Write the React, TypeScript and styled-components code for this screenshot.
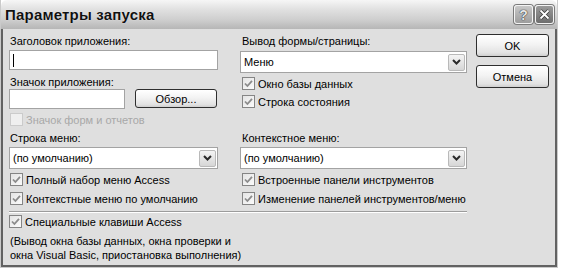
import React from "react";
import styled, { createGlobalStyle } from "styled-components";

const GlobalStyle = createGlobalStyle`
  body {
    margin: 0;
    background: #ffffff;
    font-family: "Liberation Sans", Arial, sans-serif;
    font-size: 11px;
    color: #000;
  }
`;

const Window = styled.div`
  width: 558px;
  height: 268px;
  box-sizing: border-box;
  display: flex;
  flex-direction: column;
  border: 1px solid #cacaca;
  border-top: none;
`;

const TitleBar = styled.div`
  flex: none;
  height: 29px;
  box-sizing: border-box;
  display: flex;
  align-items: center;
  padding: 0 3px 0 4px;
  border-radius: 6px 6px 0 0;
  background: linear-gradient(#f6f6f6 0%, #e2e2e2 30%, #cdcdcd 70%, #b6b6b6 100%);
`;

const Title = styled.div`
  flex: 1;
  font-size: 15px;
  font-weight: bold;
  letter-spacing: 0.2px;
  color: #111;
  text-shadow: 0 0 1px #ffffff;
`;

const CaptionButton = styled.div<{ $dark?: boolean }>`
  width: 19px;
  height: 19px;
  margin-left: 2px;
  box-sizing: border-box;
  border: 1px solid #f4f4f4;
  border-radius: 3px;
  display: flex;
  align-items: center;
  justify-content: center;
  background: ${(p) =>
    p.$dark
      ? "linear-gradient(#9a9a9a, #6e6e6e)"
      : "linear-gradient(#c8c8c8, #9d9d9d)"};
  box-shadow: 0 0 0 1px #7a7a7a;
  color: #e6e6e6;
  font-weight: bold;
  font-size: 14px;
  text-shadow: 0 0 1px #222, 0 0 1px #222;
`;

const Frame = styled.div`
  flex: 1;
  display: flex;
  align-items: flex-start;
  background: #dfdfdf;
  border: 2px solid #626262;
  border-top: none;
  padding: 6px 0 0 6px;
`;

const Main = styled.div`
  display: grid;
  grid-template-columns: 209px 227px;
  column-gap: 22px;
`;

const Column = styled.div<{ $inset: number; $lower?: boolean }>`
  display: flex;
  flex-direction: column;
  align-items: flex-start;
  margin-top: ${(p) => (p.$lower ? 6 : 0)}px;

  & > .inset {
    margin-left: ${(p) => p.$inset}px;
  }
`;

const Label = styled.div<{ $mt?: number }>`
  height: 13px;
  line-height: 13px;
  margin-top: ${(p) => p.$mt || 0}px;
  white-space: nowrap;
`;

const TextBox = styled.div<{ $w: number; $mt?: number }>`
  width: ${(p) => p.$w}px;
  height: 20px;
  box-sizing: border-box;
  margin-top: ${(p) => p.$mt || 0}px;
  border: 1px solid #a3a3a3;
  background: #fff;
  display: flex;
  align-items: center;
`;

const Caret = styled.span`
  width: 1px;
  height: 13px;
  margin-left: 3px;
  background: #000;
`;

const Row = styled.div<{ $mt?: number }>`
  display: flex;
  align-items: flex-start;
  margin-top: ${(p) => p.$mt || 0}px;
`;

const Button = styled.div<{ $w: number; $h: number; $ml?: number }>`
  width: ${(p) => p.$w}px;
  height: ${(p) => p.$h}px;
  margin-left: ${(p) => p.$ml || 0}px;
  box-sizing: border-box;
  border: 1px solid #2e2e2e;
  border-radius: 3px;
  background: linear-gradient(#ffffff 0%, #f3f3f3 45%, #e2e2e2 85%, #cfcfcf 100%);
  display: flex;
  align-items: center;
  justify-content: center;
`;

const Select = styled.div<{ $mt?: number }>`
  width: 100%;
  height: 22px;
  box-sizing: border-box;
  margin-top: ${(p) => p.$mt || 0}px;
  border: 1px solid #a3a3a3;
  background: #fff;
  display: flex;
  align-items: center;
  padding: 0 1px 0 3px;
`;

const SelectText = styled.span`
  flex: 1;
`;

const DropButton = styled.div`
  width: 17px;
  height: 17px;
  box-sizing: border-box;
  border: 1px solid #b9b9b9;
  border-radius: 2px;
  background: linear-gradient(#f4f4f4, #d6d6d6);
  display: flex;
  align-items: center;
  justify-content: center;
`;

const CheckRow = styled.div<{ $mt?: number; $disabled?: boolean }>`
  display: flex;
  align-items: center;
  gap: 3px;
  height: 13px;
  margin-top: ${(p) => p.$mt || 0}px;
  white-space: nowrap;
  color: ${(p) => (p.$disabled ? "#a8a8a8" : "#000")};
`;

const Box = styled.div<{ $disabled?: boolean }>`
  width: 13px;
  height: 13px;
  box-sizing: border-box;
  border: 1px solid ${(p) => (p.$disabled ? "#cbcbcb" : "#858585")};
  background: ${(p) =>
    p.$disabled ? "#efefef" : "linear-gradient(135deg, #e4e4e4, #fbfbfb)"};
  display: flex;
  align-items: center;
  justify-content: center;
`;

const Separator = styled.div`
  grid-column: 1 / -1;
  margin-top: 6px;
  height: 1px;
  background: #9c9c9c;
  border-bottom: 1px solid #ffffff;
`;

const Wide = styled.div`
  grid-column: 1 / -1;
`;

const Note = styled.div`
  margin-top: 6px;
  line-height: 14px;
  padding-left: 1px;
`;

const Side = styled.div`
  display: flex;
  flex-direction: column;
  gap: 8px;
  margin: -1px 0 0 9px;
`;

const Check: React.FC<{ label: string; mt?: number; disabled?: boolean; checked?: boolean }> = ({
  label,
  mt,
  disabled,
  checked = true,
}) => (
  <CheckRow className="inset" $mt={mt} $disabled={disabled}>
    <Box $disabled={disabled}>
      {checked && (
        <svg width="9" height="9" viewBox="0 0 9 9">
          <path d="M1 4.5 L3.4 7 L8 1.8" fill="none" stroke="#8b8b8b" strokeWidth="1.8" />
        </svg>
      )}
    </Box>
    {label}
  </CheckRow>
);

const Combo: React.FC<{ value: string; mt?: number }> = ({ value, mt }) => (
  <Select $mt={mt}>
    <SelectText>{value}</SelectText>
    <DropButton>
      <svg width="9" height="6" viewBox="0 0 9 6">
        <path d="M1 1 L4.5 4.5 L8 1" fill="none" stroke="#2a2a2a" strokeWidth="2" />
      </svg>
    </DropButton>
  </Select>
);

export default function App() {
  return (
    <>
      <GlobalStyle />
      <Window>
        <TitleBar>
          <Title>Параметры запуска</Title>
          <CaptionButton>?</CaptionButton>
          <CaptionButton $dark>
            <svg width="11" height="11" viewBox="0 0 11 11">
              <path d="M1.5 1.5 L9.5 9.5 M9.5 1.5 L1.5 9.5" stroke="#3a3a3a" strokeWidth="3.4" />
              <path d="M1.5 1.5 L9.5 9.5 M9.5 1.5 L1.5 9.5" stroke="#ffffff" strokeWidth="1.8" />
            </svg>
          </CaptionButton>
        </TitleBar>
        <Frame>
          <Main>
            <Column $inset={1}>
              <Label className="inset">Заголовок приложения:</Label>
              <TextBox $w={209} $mt={2}>
                <Caret />
              </TextBox>
              <Label className="inset" $mt={6}>Значок приложения:</Label>
              <Row>
                <TextBox $w={116} />
                <Button $w={82} $h={19} $ml={10}>Обзор...</Button>
              </Row>
              <Check label="Значок форм и отчетов" mt={4} disabled checked={false} />
            </Column>
            <Column $inset={2}>
              <Label className="inset">Вывод формы/страницы:</Label>
              <Combo value="Меню" mt={3} />
              <Check label="Окно базы данных" mt={4} />
              <Check label="Строка состояния" mt={5} />
            </Column>
            <Column $inset={1} $lower>
              <Label className="inset">Строка меню:</Label>
              <Combo value="(по умолчанию)" mt={2} />
              <Check label="Полный набор меню Access" mt={4} />
              <Check label="Контекстные меню по умолчанию" mt={6} />
            </Column>
            <Column $inset={2} $lower>
              <Label className="inset">Контекстное меню:</Label>
              <Combo value="(по умолчанию)" mt={2} />
              <Check label="Встроенные панели инструментов" mt={4} />
              <Check label="Изменение панелей инструментов/меню" mt={6} />
            </Column>
            <Separator />
            <Wide>
              <Column $inset={0}>
                <Check label="Специальные клавиши Access" mt={2} />
              </Column>
              <Note>
                (Вывод окна базы данных, окна проверки и
                <br />
                окна Visual Basic, приостановка выполнения)
              </Note>
            </Wide>
          </Main>
          <Side>
            <Button $w={73} $h={23}>OK</Button>
            <Button $w={73} $h={23}>Отмена</Button>
          </Side>
        </Frame>
      </Window>
    </>
  );
}
